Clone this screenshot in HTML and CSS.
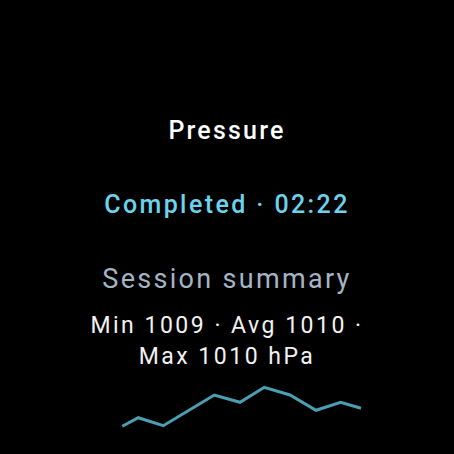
FILE: index.html
```html
<!DOCTYPE html>
<html>
<head>
<meta charset="utf-8">
<link rel="stylesheet" href="styles.css">
</head>
<body>
<div class="screen">
  <div class="title">Pressure</div>
  <div class="status">Completed · 02:22</div>
  <div class="heading">Session summary</div>
  <div class="summary">Min 1009 · Avg 1010 ·<br>Max 1010 hPa</div>
  <svg class="chart" width="454" height="60" viewBox="0 380 454 60">
    <polyline points="122.3,427.3 138.3,418.7 163.3,426.7 214.3,396 240,403.3 264.3,388.3 290,396 316,411.3 340.7,403.3 361,409.3" fill="none" stroke="#4aa0b2" stroke-width="3" stroke-linejoin="miter"/>
  </svg>
</div>
</body>
</html>
```
FILE: styles.css
```css
html, body {
  margin: 0;
  padding: 0;
  background: #000;
}
.screen {
  width: 454px;
  height: 454px;
  display: flex;
  flex-direction: column;
  align-items: center;
  font-family: Roboto, "Noto Sans", sans-serif;
  text-align: center;
  overflow: hidden;
}
.title {
  margin-top: 115px;
  font-size: 25px;
  font-weight: 500;
  letter-spacing: 2.2px;
  color: #ffffff;
  line-height: 32px;
}
.status {
  margin-top: 42px;
  font-size: 25px;
  font-weight: 500;
  letter-spacing: 2.4px;
  color: #6dd3ec;
  line-height: 32px;
}
.heading {
  margin-top: 41px;
  font-size: 27px;
  font-weight: 400;
  letter-spacing: 2.3px;
  color: #a5b5c4;
  line-height: 34px;
}
.summary {
  margin-top: 14px;
  font-size: 23px;
  font-weight: 400;
  letter-spacing: 2.5px;
  color: #f2f2f2;
  line-height: 31px;
}
.chart {
  margin-top: 7px;
  display: block;
  flex-shrink: 0;
}
```
